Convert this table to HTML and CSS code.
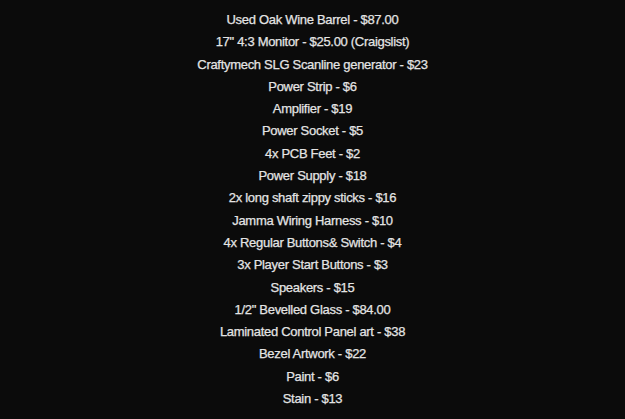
FILE: index.html
```html
<!DOCTYPE html>
<html>
<head>
<meta charset="utf-8">
<link rel="stylesheet" href="styles.css">
</head>
<body>
<ul class="list">
<li>Used Oak Wine Barrel - $87.00</li>
<li>17" 4:3 Monitor - $25.00 (Craigslist)</li>
<li>Craftymech SLG Scanline generator - $23</li>
<li>Power Strip - $6</li>
<li>Amplifier - $19</li>
<li>Power Socket - $5</li>
<li>4x PCB Feet - $2</li>
<li>Power Supply - $18</li>
<li>2x long shaft zippy sticks - $16</li>
<li>Jamma Wiring Harness - $10</li>
<li>4x Regular Buttons&amp; Switch - $4</li>
<li>3x Player Start Buttons - $3</li>
<li>Speakers - $15</li>
<li>1/2" Bevelled Glass - $84.00</li>
<li>Laminated Control Panel art - $38</li>
<li>Bezel Artwork - $22</li>
<li>Paint - $6</li>
<li>Stain - $13</li>
</ul>
</body>
</html>
```
FILE: styles.css
```css
html, body {
  margin: 0;
  padding: 0;
  background: #0b0b0b;
  height: 100%;
}
.list {
  list-style: none;
  margin: 0;
  padding: 9px 0 0 0;
  font-family: "Liberation Sans", Arial, sans-serif;
  font-size: 13px;
  letter-spacing: -0.3px;
  -webkit-text-stroke: 0.25px #e4e4e4;
  line-height: 22.3px;
  color: #e4e4e4;
  text-align: center;
}
```
